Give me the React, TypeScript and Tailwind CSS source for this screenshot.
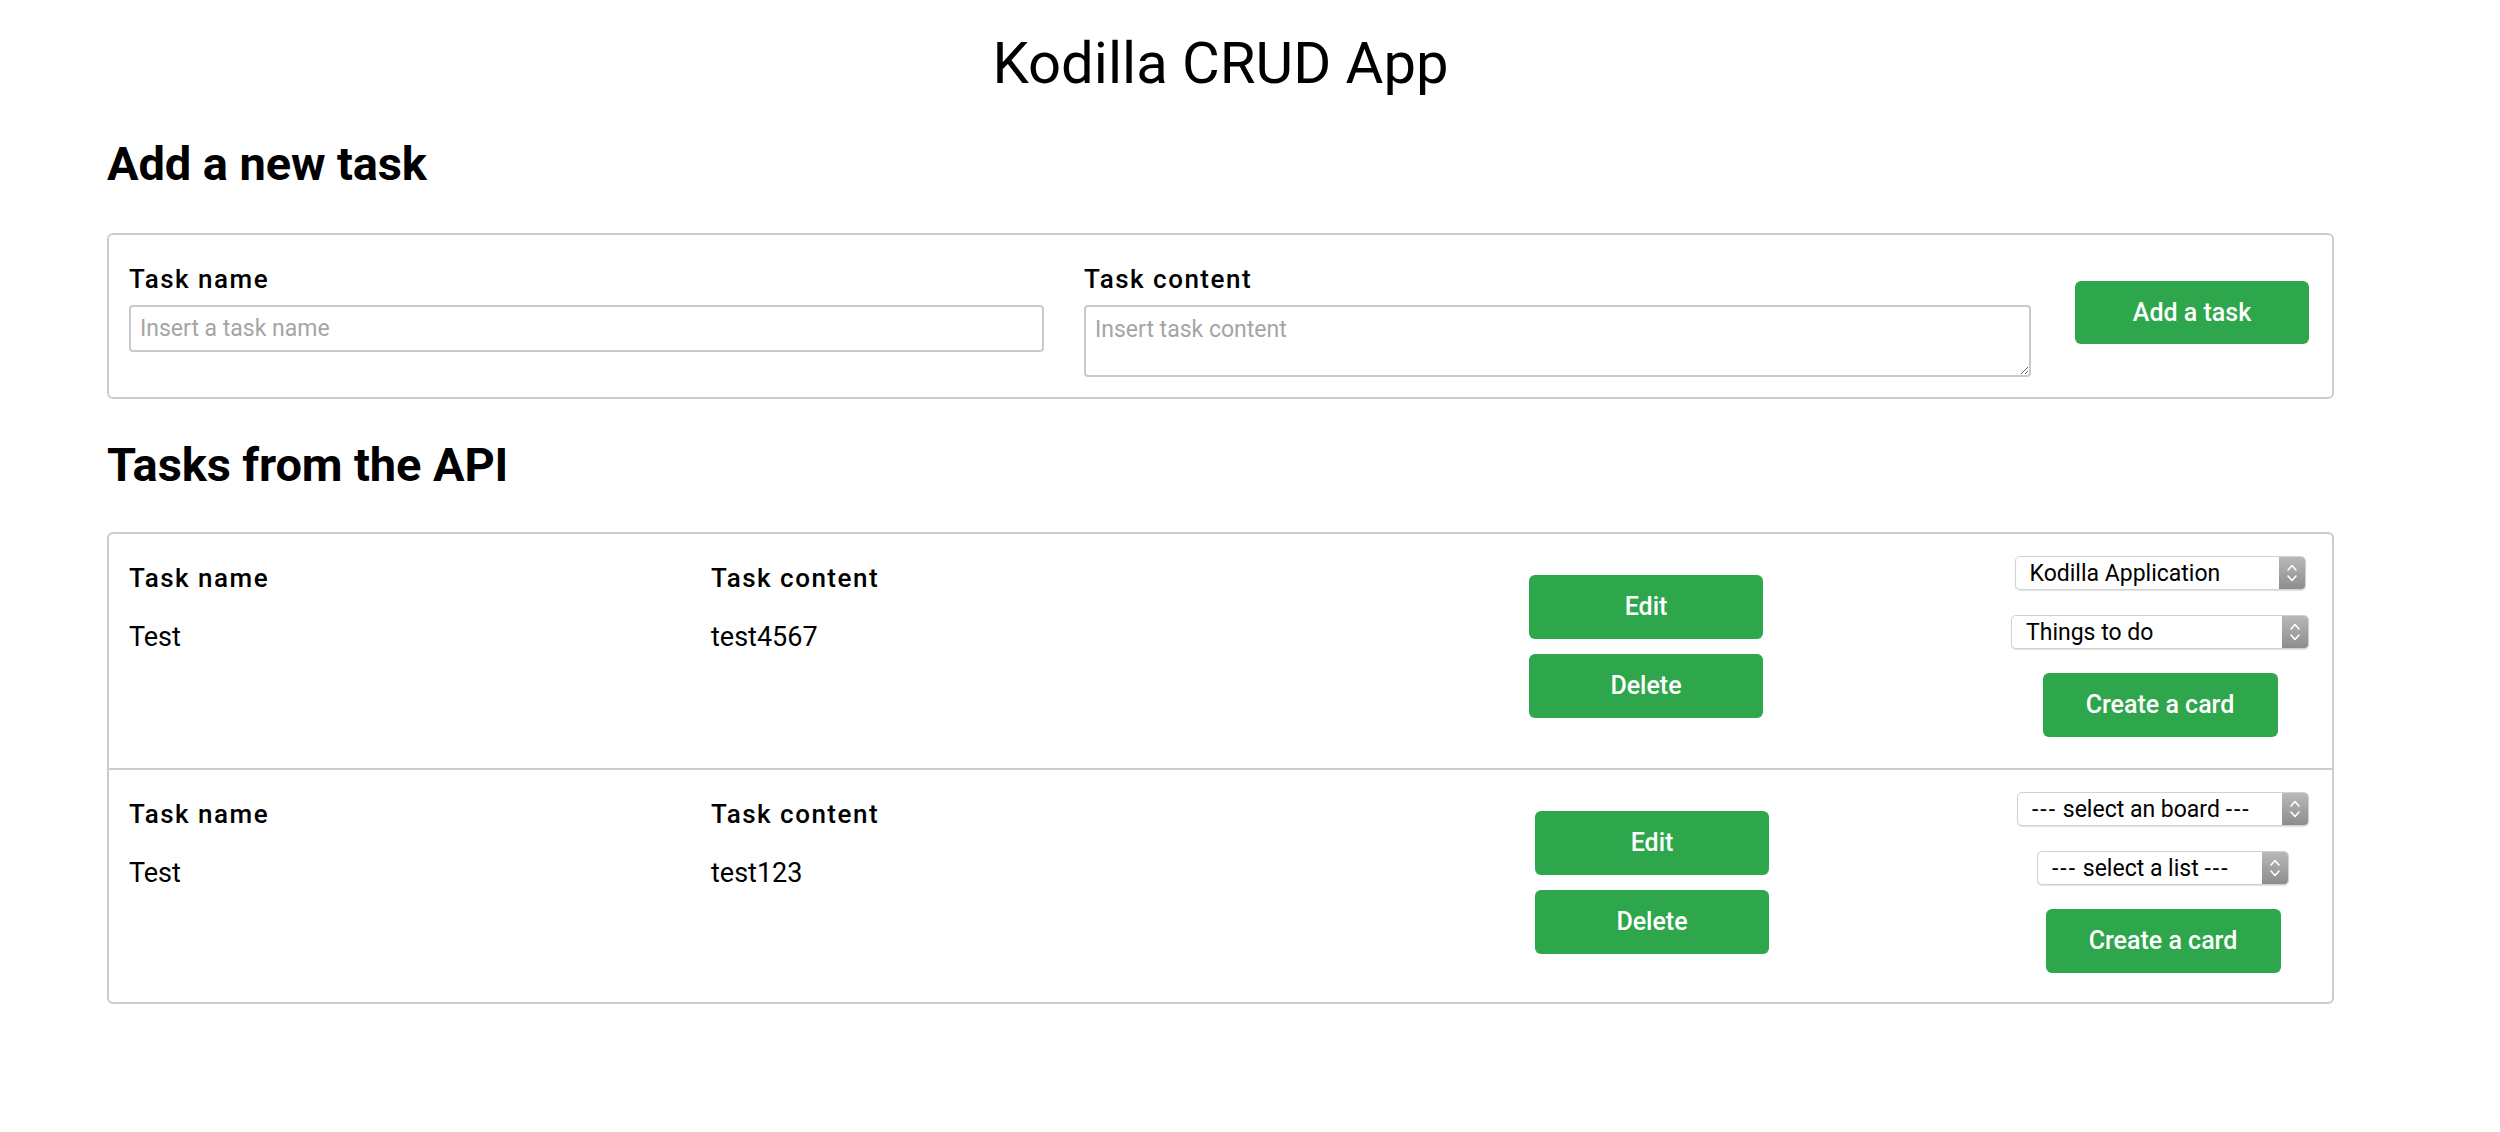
import React from "react";

const GREEN_BTN =
  "flex items-center justify-center rounded-[6px] bg-[#2ea64b] text-[25px] font-medium text-white";

const LABEL = "text-[26px] font-medium leading-[30px] tracking-[1.5px]";

type Task = {
  name: string;
  content: string;
  board: { label: string; width: number };
  list: { label: string; width: number };
};

const TASKS: Task[] = [
  {
    name: "Test",
    content: "test4567",
    board: { label: "Kodilla Application", width: 291 },
    list: { label: "Things to do", width: 298 },
  },
  {
    name: "Test",
    content: "test123",
    board: { label: "--- select an board ---", width: 292 },
    list: { label: "--- select a list ---", width: 252 },
  },
];

function OptionText({ text }: { text: string }) {
  const parts = text.split(/(---)/);
  return (
    <span className="whitespace-pre">
      {parts.map((p, i) =>
        p === "---" ? (
          <span key={i} className="tracking-[2px]">
            {p}
          </span>
        ) : (
          <span key={i}>{p}</span>
        ),
      )}
    </span>
  );
}

// macOS-style select box with the grey up/down stepper on the right
function FakeSelect({ label, width }: { label: string; width: number }) {
  return (
    <div
      className="flex h-[34px] items-stretch overflow-hidden rounded-[5px] border border-[#d2d2d2] bg-white shadow-[0_1px_1px_rgba(0,0,0,0.12)]"
      style={{ width }}
    >
      <div className="flex flex-1 items-center whitespace-nowrap pl-[14px] text-[23px] leading-none text-black">
        <OptionText text={label} />
      </div>
      <div className="flex w-[26px] items-center justify-center bg-gradient-to-b from-[#b9b9b9] to-[#8d8d8d]">
        <svg width="12" height="22" viewBox="0 0 12 22" fill="none">
          <path d="M2 8 L6 3.5 L10 8" stroke="white" strokeWidth="1.6" strokeLinecap="round" strokeLinejoin="round" />
          <path d="M2 14 L6 18.5 L10 14" stroke="white" strokeWidth="1.6" strokeLinecap="round" strokeLinejoin="round" />
        </svg>
      </div>
    </div>
  );
}

function TaskRow({ task, first }: { task: Task; first: boolean }) {
  return (
    <div
      className={`flex h-[234px] items-start pl-[20px] pr-[23px] pt-[22px] ${
        first ? "" : "border-t-2 border-[#cccccc]"
      }`}
    >
      <div className="mt-[7px] w-[582px]">
        <div className={LABEL}>Task name</div>
        <div className="mt-[29px] text-[27px] leading-[30px]">{task.name}</div>
      </div>
      <div className="mt-[7px] w-[818px]">
        <div className={LABEL}>Task content</div>
        <div className="mt-[29px] text-[27px] leading-[30px]">{task.content}</div>
      </div>
      <div className="ml-auto mt-[19px] flex w-[234px] flex-col gap-[15px]">
        <button className={`${GREEN_BTN} h-[64px] w-[234px]`}>Edit</button>
        <button className={`${GREEN_BTN} h-[64px] w-[234px]`}>Delete</button>
      </div>
      <div className="ml-[248px] flex flex-col items-center">
        <FakeSelect label={task.board.label} width={task.board.width} />
        <div className="mt-[25px]">
          <FakeSelect label={task.list.label} width={task.list.width} />
        </div>
        <button className={`${GREEN_BTN} mt-[24px] h-[64px] w-[235px]`}>Create a card</button>
      </div>
    </div>
  );
}

export default function App() {
  return (
    <div className="min-h-screen bg-white font-['Roboto','Helvetica_Neue',Arial,sans-serif] text-black">
      <div className="ml-[107px] w-[2227px] pt-[28px]">
        <h1 className="text-center text-[58px] font-normal leading-[70px]">Kodilla CRUD App</h1>

        <h2 className="mt-[37px] text-[47px] font-bold leading-[58px] tracking-[-0.1px]">Add a new task</h2>
        <form
          className="mt-[40px] flex items-start rounded-[6px] border-2 border-[#cccccc] pb-[20px] pl-[20px] pr-[23px] pt-[29px]"
          onSubmit={(e) => e.preventDefault()}
        >
          <div className="w-[915px]">
            <label className={`block ${LABEL}`}>Task name</label>
            <input
              type="text"
              placeholder="Insert a task name"
              className="mt-[11px] block h-[47px] w-full rounded-[4px] border-2 border-[#c9c9c9] px-[9px] text-[23px] outline-none placeholder:text-[#a5a5a5]"
            />
          </div>
          <div className="ml-[40px] w-[947px]">
            <label className={`block ${LABEL}`}>Task content</label>
            <textarea
              placeholder="Insert task content"
              className="mt-[11px] block h-[72px] w-full rounded-[4px] border-2 border-[#c9c9c9] px-[9px] pt-[9px] text-[23px] leading-[27px] outline-none placeholder:text-[#a5a5a5]"
            />
          </div>
          <button type="submit" className={`${GREEN_BTN} ml-[44px] mt-[17px] h-[63px] w-[234px]`}>
            Add a task
          </button>
        </form>

        <h2 className="mt-[37px] text-[47px] font-bold leading-[58px] tracking-[-0.1px]">Tasks from the API</h2>
        <div className="mt-[38px] rounded-[6px] border-2 border-[#cccccc]">
          {TASKS.map((t, i) => (
            <TaskRow key={i} task={t} first={i === 0} />
          ))}
        </div>
      </div>
    </div>
  );
}
